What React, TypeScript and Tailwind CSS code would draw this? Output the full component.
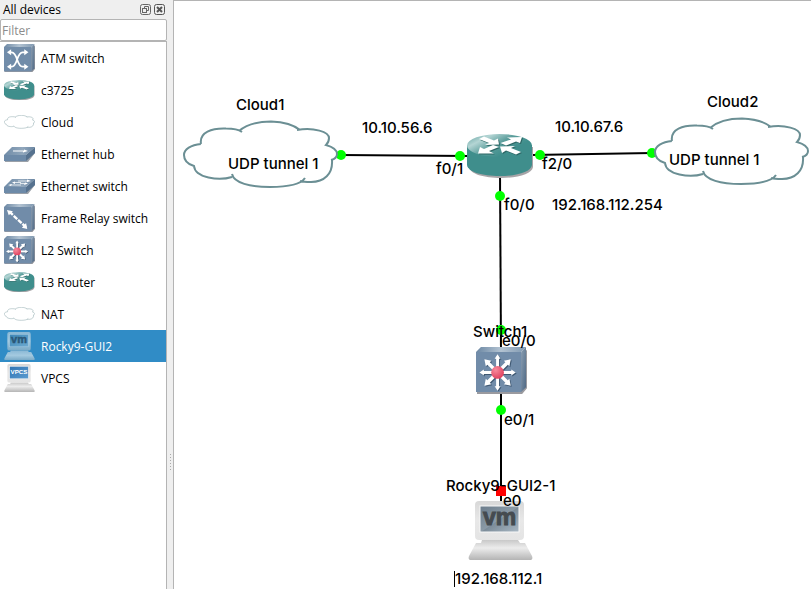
import { useState } from 'react'
import type { ReactNode } from 'react'
import clsx from 'clsx'

const CLOUD_PATH =
  'M18 24 C16 12 29 8 43 8.5 C50 8.5 55 9 59 12 M56 11 C64 4 76 1.5 88 1.5 C100 2 111 5 117 10 M114 10 C131 7 146 12 146 18 C146 21 145 23 143 25 C150 27 154 30 154 34 C154 37 152 39 148 40 M149 40 C150 54 141 62 128 62 C124 62 120 62 117 61 M122 58 C118 64 105 67 87 67 C67 67 51 63 49 54 M49 57 C36 61 12 58 11 46 C4 44 1 40 1 35 C1 29 8 25 18 24'

const CLOUD_FILL =
  'M18 24 C16 12 29 8 43 8.5 C50 8.5 55 9 57 11 C64 4 76 1.5 88 1.5 C100 2 111 5 116 10 C131 7 146 12 146 18 C146 21 145 23 143 25 C150 27 154 30 154 34 C154 37 152 39 149 40 C150 54 141 62 128 62 L119 61 C112 65 105 67 87 67 C67 67 52 63 49 57 C36 61 12 58 11 46 C4 44 1 40 1 35 C1 29 8 25 18 24'

interface IconProps {
  className?: string
}

function CloudIcon({ className }: IconProps) {
  return (
    <svg viewBox="0 0 156 69" className={className} aria-hidden="true">
      <path d={CLOUD_FILL} fill="#fff" />
      <path d={CLOUD_PATH} fill="none" stroke="#6b8f94" strokeWidth="2" />
    </svg>
  )
}

const ROUTER_ARROWS = [
  'M12 5 L17 2.500 L27 6.500 L31 4.500 L32 10.500 L18 11 L22 9 Z',
  'M33.500 9 L44 5.500 L40 3.500 L55 3 L53 9 L49 7.500 L39 11.500 Z',
  'M26 11 L32 13 L22 17 L27 19.500 L11 19.500 L13 13 L17 15 Z',
  'M33 12.500 L48 12 L44 14 L54 18 L49 20.500 L39 16.500 L35 19 Z',
]

function RouterIcon({ className }: IconProps) {
  return (
    <svg viewBox="0 0 67 45" className={className} aria-hidden="true">
      <defs>
        <linearGradient id="router-top" x1="0" y1="0.1" x2="0.75" y2="0.6">
          <stop offset="0" stopColor="#6aa7a5" />
          <stop offset="0.3" stopColor="#b4d5d4" />
          <stop offset="0.65" stopColor="#5a9d9b" />
          <stop offset="1" stopColor="#3f8e8c" />
        </linearGradient>
      </defs>
      <path d="M2 13 V33 C3 40 17 44 34 44 C51 44 65 40 66 33 V13 Z" fill="#a7a4a7" />
      <path d="M0 11 V31 C1 38 15 42 32.500 42 C50 42 64 38 65 31 V11 Z" fill="#3f8e8c" />
      <ellipse cx="32.500" cy="11.500" rx="32.500" ry="11.500" fill="url(#router-top)" />
      {ROUTER_ARROWS.map((d) => (
        <g key={d}>
          <path d={d} fill="#2c6664" transform="translate(1 1)" />
          <path d={d} fill="#fff" />
        </g>
      ))}
    </svg>
  )
}

// Isometric box shared by the ATM, Frame Relay and L2 switch symbols
function SwitchBox({ className, children }: IconProps & { children: ReactNode }) {
  return (
    <svg viewBox="0 0 52 48" className={className} aria-hidden="true">
      <defs>
        <linearGradient id="box-top" x1="0" y1="0" x2="1" y2="0">
          <stop offset="0" stopColor="#6b87a3" />
          <stop offset="0.5" stopColor="#b3c3d2" />
          <stop offset="1" stopColor="#7f98b0" />
        </linearGradient>
        <linearGradient id="box-side" x1="0" y1="0" x2="1" y2="1">
          <stop offset="0" stopColor="#8a9eb2" />
          <stop offset="1" stopColor="#4e6884" />
        </linearGradient>
      </defs>
      <path d="M1 6 H47 L52 3 V42 L47 48 H1 Z" fill="#9a9a9f" />
      <path d="M0 5 L5 0 H51 L46 5 Z" fill="url(#box-top)" />
      <path d="M46 5 L51 0 V41 L46 46 Z" fill="url(#box-side)" />
      <path d="M0 5 H46 V46 H0 Z" fill="#718ca9" />
      {children}
    </svg>
  )
}

const STRAIGHT_ARROW = 'M-1.500 0 V-14 H-3 L0 -18.500 L3 -14 H1.500 V0 Z'
const DIAGONAL_ARROW = 'M-1.800 0 V-13 H-4 L0 -19 L4 -13 H1.800 V0 Z'

function L2SwitchIcon({ className }: IconProps) {
  return (
    <SwitchBox className={className}>
      <defs>
        <radialGradient id="switch-core" cx="0.35" cy="0.3" r="0.8">
          <stop offset="0" stopColor="#f78a9c" />
          <stop offset="1" stopColor="#dc3a58" />
        </radialGradient>
      </defs>
      {[0, 45, 90, 135, 180, 225, 270, 315].map((angle) => {
        const d = angle % 90 === 0 ? STRAIGHT_ARROW : DIAGONAL_ARROW
        return (
          <g key={angle}>
            <path d={d} fill="#3f5872" transform={`translate(23 27) rotate(${angle})`} />
            <path d={d} fill="#fff" transform={`translate(22 26) rotate(${angle})`} />
          </g>
        )
      })}
      <circle cx="22" cy="26" r="6.500" fill="url(#switch-core)" />
    </SwitchBox>
  )
}

function AtmSwitchIcon({ className }: IconProps) {
  return (
    <SwitchBox className={className}>
      <g fill="none" stroke="#fff" strokeWidth="3">
        <path d="M9 14 H13 C23 14 21 38 31 38 H37" />
        <path d="M9 38 H13 C23 38 21 14 31 14 H37" />
      </g>
      <g fill="#fff">
        <path d="M5 14 L12 9 V19 Z" />
        <path d="M5 38 L12 33 V43 Z" />
        <path d="M41 14 L34 9 V19 Z" />
        <path d="M41 38 L34 33 V43 Z" />
      </g>
    </SwitchBox>
  )
}

function FrameRelayIcon({ className }: IconProps) {
  return (
    <SwitchBox className={className}>
      <path d="M9 13 L37 39" stroke="#fff" strokeWidth="4" strokeDasharray="8 2" />
      <path d="M5 10 L15 12 L8 19 Z M39 42 L30 40 L37 32 Z" fill="#fff" />
    </SwitchBox>
  )
}

function FlatBox({ className, children }: IconProps & { children: ReactNode }) {
  return (
    <svg viewBox="0 0 31 15" className={className} aria-hidden="true">
      <defs>
        <linearGradient id="flat-top" x1="0" y1="0" x2="1" y2="0">
          <stop offset="0" stopColor="#6f8ba7" />
          <stop offset="0.6" stopColor="#91a7bc" />
          <stop offset="1" stopColor="#6985a2" />
        </linearGradient>
      </defs>
      <path d="M0 8 H23 L31 1 V6 L24 15 H1 Z" fill="#9aa0a8" />
      <path d="M0 8 L8 0 H31 L22 8 Z" fill="url(#flat-top)" />
      <path d="M0 8 H22 V14 H0 Z" fill="#6d8aa8" />
      <path d="M22 8 L31 0 V6 L22 14 Z" fill="#56728f" />
      {children}
    </svg>
  )
}

function HubIcon({ className }: IconProps) {
  return (
    <FlatBox className={className}>
      <path d="M9 3.500 H20 V2.500 L24 4 L19 5.500 V4.500 H9 Z" fill="#fff" />
    </FlatBox>
  )
}

function EthernetSwitchIcon({ className }: IconProps) {
  return (
    <FlatBox className={className}>
      <path d="M14 2 H24 M10 3.500 H17 M16 4.500 H23 M6 6 H17" stroke="#dfe6ec" />
      <path d="M23 0.500 L27 2 L23 3 Z M11 2.500 L8 3.500 L11 5 Z M21 3.500 L24 4.500 L20 6 Z M8 5 L4 6 L7 7 Z" fill="#fff" />
    </FlatBox>
  )
}

function ComputerIcon({ className, variant = 'vm' }: IconProps & { variant?: 'vm' | 'vm-selected' | 'vpcs' }) {
  const selected = variant === 'vm-selected'
  const body = selected ? 'pc-body-selected' : 'pc-body'
  const base = selected ? 'pc-body-selected' : 'pc-base'
  const screen = selected ? 'pc-screen-selected' : variant === 'vpcs' ? 'pc-screen-vpcs' : 'pc-screen'
  const ink = selected ? '#2b5878' : '#454b50'

  return (
    <svg viewBox="0 0 65 60" className={className} aria-hidden="true">
      <defs>
        <linearGradient id="pc-body" x1="0" y1="0" x2="0" y2="1">
          <stop offset="0" stopColor="#d8d8d8" />
          <stop offset="0.5" stopColor="#e8e8e8" />
          <stop offset="1" stopColor="#e4e4e4" />
        </linearGradient>
        <linearGradient id="pc-base" x1="0" y1="0" x2="0" y2="1">
          <stop offset="0" stopColor="#c8c8c8" />
          <stop offset="0.4" stopColor="#ececec" />
          <stop offset="1" stopColor="#b4b4b4" />
        </linearGradient>
        <linearGradient id="pc-body-selected" x1="0" y1="0" x2="0" y2="1">
          <stop offset="0" stopColor="#8ab8d5" />
          <stop offset="0.5" stopColor="#a4cae0" />
          <stop offset="1" stopColor="#79a9c6" />
        </linearGradient>
        <linearGradient id="pc-screen" x1="0" y1="0" x2="1" y2="1">
          <stop offset="0" stopColor="#6a7b8a" />
          <stop offset="0.5" stopColor="#8b9aa6" />
          <stop offset="0.52" stopColor="#7c8c99" />
          <stop offset="1" stopColor="#a9b8c4" />
        </linearGradient>
        <linearGradient id="pc-screen-selected" x1="0" y1="0" x2="1" y2="1">
          <stop offset="0" stopColor="#3d86b6" />
          <stop offset="1" stopColor="#6daad0" />
        </linearGradient>
        <linearGradient id="pc-screen-vpcs" x1="0" y1="0" x2="1" y2="1">
          <stop offset="0" stopColor="#2f74b3" />
          <stop offset="1" stopColor="#5b9bd0" />
        </linearGradient>
      </defs>
      <path d="M14 39 H50 L52 42 H57 L64 55 C65 58 64 59 61 59 H4 C1 59 0 58 1 55 L8 42 H13 Z" fill={`url(#${base})`} />
      <rect x="7" y="0" width="49" height="39" rx="4" fill={`url(#${body})`} />
      <rect x="12" y="5" width="39" height="26" fill={`url(#${screen})`} stroke={selected ? '#a9cde2' : '#f8f8f8'} />
      {variant === 'vpcs' ? (
        <text x="31.500" y="22" textAnchor="middle" fontSize="13" fontWeight="700" fontFamily="Liberation Sans, sans-serif" fill="#fff">
          VPCS
        </text>
      ) : (
        <text x="31.500" y="24" textAnchor="middle" fontSize="23" fontWeight="700" fontFamily="Liberation Sans, sans-serif" fill={ink} stroke={ink}>
          vm
        </text>
      )}
    </svg>
  )
}

const devices = [
  { name: 'ATM switch', icon: <AtmSwitchIcon className="w-[31px]" /> },
  { name: 'c3725', icon: <RouterIcon className="w-[31px]" /> },
  { name: 'Cloud', icon: <CloudIcon className="w-[31px]" /> },
  { name: 'Ethernet hub', icon: <HubIcon className="w-[31px]" /> },
  { name: 'Ethernet switch', icon: <EthernetSwitchIcon className="w-[31px]" /> },
  { name: 'Frame Relay switch', icon: <FrameRelayIcon className="w-[31px]" /> },
  { name: 'L2 Switch', icon: <L2SwitchIcon className="w-[31px]" /> },
  { name: 'L3 Router', icon: <RouterIcon className="w-[31px]" /> },
  { name: 'NAT', icon: <CloudIcon className="w-[31px]" /> },
  {
    name: 'Rocky9-GUI2',
    icon: <ComputerIcon className="w-[31px]" />,
    selectedIcon: <ComputerIcon variant="vm-selected" className="w-[31px]" />,
  },
  { name: 'VPCS', icon: <ComputerIcon variant="vpcs" className="w-[31px]" /> },
]

function DevicePanel() {
  const [filter, setFilter] = useState('')
  const [selected, setSelected] = useState('Rocky9-GUI2')

  const visible = devices.filter((d) => d.name.toLowerCase().includes(filter.toLowerCase()))

  return (
    <aside className="w-[167px] shrink-0 flex flex-col">
      <header className="h-[19px] flex items-center justify-between pl-[3px] pr-0.5">
        <h2>All devices</h2>
        <div className="flex gap-[3px]">
          <button type="button" aria-label="Float panel" className="text-[#666]">
            <svg viewBox="0 0 11 11" className="w-[11px] h-[11px]" fill="none" stroke="currentColor">
              <rect x="0.500" y="0.500" width="10" height="10" rx="2" />
              <path d="M4.500 4 V2.500 H8.500 V6.500 H7" />
              <rect x="2.500" y="4.500" width="4" height="4" />
            </svg>
          </button>
          <button type="button" aria-label="Close panel" className="text-[#555]">
            <svg viewBox="0 0 11 11" className="w-[11px] h-[11px]" fill="none" stroke="currentColor">
              <rect x="0.500" y="0.500" width="10" height="10" rx="2" />
              <path d="M3 3 L8 8 M8 3 L3 8" strokeWidth="2" />
            </svg>
          </button>
        </div>
      </header>
      <input
        type="text"
        aria-label="Filter devices"
        placeholder="Filter"
        value={filter}
        onChange={(e) => setFilter(e.target.value)}
        className="h-[22px] w-full bg-white border border-[#b4b4b4] rounded-[2px] px-px outline-none placeholder:text-[#8c8c8c]"
      />
      <ul className="flex-1 bg-white border-t border-r border-[#b4b4b4]">
        {visible.map((device) => {
          const isSelected = device.name === selected
          return (
            <li key={device.name}>
              <button
                type="button"
                aria-pressed={isSelected}
                onClick={() => setSelected(device.name)}
                className={clsx(
                  'w-full h-8 flex items-center gap-1.5 pl-1 text-left',
                  isSelected ? 'bg-[#308cc6] text-white' : 'text-black'
                )}
              >
                {isSelected && device.selectedIcon ? device.selectedIcon : device.icon}
                <span className="pt-0.5">{device.name}</span>
              </button>
            </li>
          )
        })}
      </ul>
    </aside>
  )
}

function Splitter() {
  return (
    <div className="w-1.5 shrink-0 flex flex-col items-center justify-center gap-0.5 pt-[334px]">
      {[0, 1, 2, 3, 4, 5].map((dot) => (
        <span key={dot} className="w-px h-px bg-[#aaa]" />
      ))}
    </div>
  )
}

const links = [
  { x1: 167, y1: 154, x2: 294, y2: 155 },
  { x1: 358, y1: 154, x2: 478, y2: 152 },
  { x1: 326, y1: 172, x2: 327, y2: 350 },
  { x1: 327, y1: 390, x2: 327, y2: 502 },
]

const ports = [
  { x: 167, y: 154 },
  { x: 286, y: 155 },
  { x: 366, y: 154 },
  { x: 478, y: 152 },
  { x: 326, y: 195 },
  { x: 327, y: 329 },
  { x: 327, y: 409 },
]

const nodes = [
  { id: 'cloud1', x: 9, y: 119, icon: <CloudIcon className="w-[156px]" /> },
  { id: 'cloud2', x: 480, y: 116, icon: <CloudIcon className="w-[156px]" /> },
  { id: 'router', x: 293, y: 133, icon: <RouterIcon className="w-[67px]" /> },
  { id: 'switch', x: 302, y: 346, icon: <L2SwitchIcon className="w-[51px]" /> },
  { id: 'vm', x: 294, y: 500, icon: <ComputerIcon className="w-[65px]" /> },
]

const labels = [
  { text: 'Cloud1', x: 62, y: 96 },
  { text: 'UDP tunnel 1', x: 54, y: 155 },
  { text: '10.10.56.6', x: 188, y: 119 },
  { text: 'f0/1', x: 262, y: 160 },
  { text: 'f2/0', x: 368, y: 155 },
  { text: '10.10.67.6', x: 381, y: 118 },
  { text: 'Cloud2', x: 533, y: 93 },
  { text: 'UDP tunnel 1', x: 495, y: 151 },
  { text: 'f0/0', x: 330, y: 196 },
  { text: '192.168.112.254', x: 378, y: 196 },
  { text: 'Switch1', x: 299, y: 323 },
  { text: 'e0/0', x: 328, y: 332 },
  { text: 'e0/1', x: 330, y: 411 },
  { text: 'Rocky9-GUI2-1', x: 272, y: 477 },
  { text: 'e0', x: 329, y: 492 },
  { text: '192.168.112.1', x: 280, y: 570, editing: true },
]

function Topology() {
  return (
    <main className="relative flex-1 overflow-hidden bg-white border-l border-t border-[#b4b4b4]">
      <svg className="absolute inset-0 w-full h-full" aria-hidden="true">
        {links.map((link, index) => (
          <line key={index} {...link} stroke="#000" strokeWidth="2" />
        ))}
        {ports.map((port, index) => (
          <circle key={index} cx={port.x} cy={port.y} r="5" fill="#0f0" />
        ))}
        {/* stopped port */}
        <rect x="322" y="485" width="10" height="10" fill="#f00" />
      </svg>

      {nodes.map((node) => (
        <div key={node.id} className="absolute" style={{ left: node.x, top: node.y }}>
          {node.icon}
        </div>
      ))}

      {labels.map((label, index) => (
        <span
          key={index}
          className={clsx(
            "absolute whitespace-nowrap font-['Inter','Liberation_Sans',sans-serif] text-[15px] leading-4 font-medium text-black",
            label.editing && 'border-l border-black'
          )}
          style={{ left: label.x, top: label.y }}
        >
          {label.text}
        </span>
      ))}
    </main>
  )
}

export default function App() {
  return (
    <div className="min-h-screen flex bg-[#efefef] font-['Open_Sans','Noto_Sans',sans-serif] text-[12px] leading-4 text-black">
      <DevicePanel />
      <Splitter />
      <Topology />
    </div>
  )
}
